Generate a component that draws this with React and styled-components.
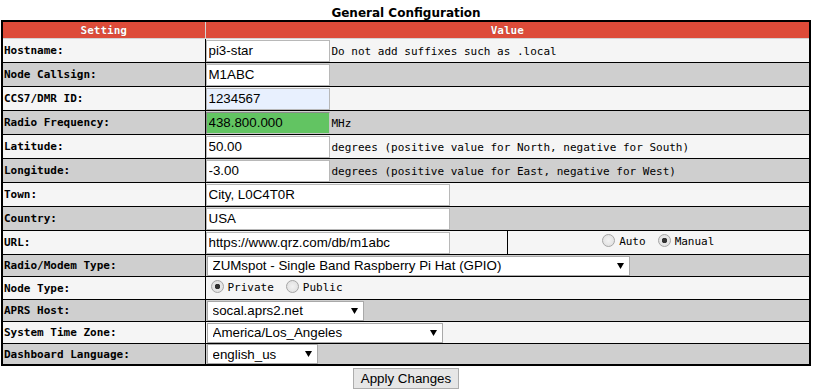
import React from 'react';
import styled, { createGlobalStyle } from 'styled-components';

const GlobalStyle = createGlobalStyle`
  body {
    margin: 0;
    background: #fff;
  }
`;

const Page = styled.div`
  width: 810px;
  margin: 0 1px;
  display: flex;
  flex-direction: column;
  align-items: center;
`;

const Title = styled.div`
  height: 20px;
  font: bold 12px "DejaVu Sans", Verdana, sans-serif;
  line-height: 27px;
  color: #000;
`;

const Table = styled.table`
  width: 810px;
  table-layout: fixed;
  border-collapse: collapse;
  border: 2px solid #000;
  font: 11px "DejaVu Sans Mono", monospace;
  color: #000;
`;

const Th = styled.th`
  height: 16px;
  padding: 0;
  background: #dd4b39;
  color: #fff;
  font-weight: bold;
  text-align: center;
  border: 1px solid #d2d2d2;
  text-shadow: 0 0 1px rgba(0, 0, 0, 0.35);
`;

const Row = styled.tr`
  background: ${p => (p.$alt ? '#cfcfcf' : '#f5f5f5')};
`;

const Label = styled.td`
  height: ${p => p.$h}px;
  padding: 0 1px;
  border: 1px solid #000;
  font-weight: bold;
  white-space: nowrap;
`;

const Cell = styled.td`
  padding: 0;
  border: 1px solid #000;
  text-align: ${p => p.$align || 'left'};
  white-space: nowrap;
`;

const Field = styled.div`
  display: flex;
  align-items: center;
  gap: 2px;
`;

const Hint = styled.span`
  font: 11px "DejaVu Sans Mono", monospace;
  color: #000;
  padding-top: 1px;
`;

const TextInput = styled.input`
  box-sizing: border-box;
  width: ${p => p.$w}px;
  height: 22px;
  margin: 0;
  padding: 1px 2px;
  border: 1px solid #b8b8b8;
  border-color: ${p => (p.$inset ? '#8a8a8a #c8c8c8 #c8c8c8 #8a8a8a' : '#b8b8b8')};
  background: ${p => p.$bg || '#fff'};
  font: 13.333px "Liberation Sans", Arial, sans-serif;
  color: #000;
  outline: none;
`;

const SelectWrap = styled.span`
  position: relative;
  display: inline-block;
  margin-left: 1px;
  vertical-align: middle;
`;

const Select = styled.select`
  box-sizing: border-box;
  appearance: none;
  width: ${p => p.$w}px;
  height: 20px;
  margin: 0;
  padding: 0 16px 0 5px;
  border: 1px solid #a9a9a9;
  border-radius: 0;
  background: #fff;
  font: 13.333px "Liberation Sans", Arial, sans-serif;
  color: #000;
  outline: none;
`;

const Arrow = styled.svg`
  position: absolute;
  right: 6px;
  top: 7px;
  pointer-events: none;
`;

const Radios = styled.div`
  display: inline-flex;
  align-items: center;
  gap: 12px;
  padding-left: ${p => p.$pad || 0}px;
`;

const RadioLabel = styled.label`
  display: inline-flex;
  align-items: center;
  gap: 4px;
  font: 11px "DejaVu Sans Mono", monospace;
  color: #000;
`;

const RadioDot = styled.span`
  box-sizing: border-box;
  width: 13px;
  height: 13px;
  border-radius: 50%;
  border: 1px solid #a6a6a6;
  background: radial-gradient(circle, ${p => (p.$on ? '#333 0 2.5px, #e8e8e8 3px' : '#f2f2f2 0')}, #dcdcdc 100%);
  margin-top: -2px;
`;

const ButtonRow = styled.div`
  padding-top: 2px;
`;

const Button = styled.button`
  height: 21px;
  padding: 0 7px;
  border: 1px solid #adadad;
  background: #e6e6e6;
  font: 13.333px "Liberation Sans", Arial, sans-serif;
  color: #000;
`;

function Dropdown({ width, value }) {
  return (
    <SelectWrap>
      <Select $w={width} defaultValue={value}>
        <option>{value}</option>
      </Select>
      <Arrow width="7" height="6" viewBox="0 0 7 6">
        <path d="M0 0h7L3.5 6z" fill="#000" />
      </Arrow>
    </SelectWrap>
  );
}

function Radio({ on, children }) {
  return (
    <RadioLabel>
      <RadioDot $on={on} />
      {children}
    </RadioLabel>
  );
}

export default function App() {
  return (
    <Page>
      <GlobalStyle />
      <Title>General Configuration</Title>
      <Table>
        <colgroup>
          <col style={{ width: 203 }} />
          <col style={{ width: 302 }} />
          <col />
        </colgroup>
        <thead>
          <tr>
            <Th>Setting</Th>
            <Th colSpan={2}>Value</Th>
          </tr>
        </thead>
        <tbody>
          <Row>
            <Label $h={23}>Hostname:</Label>
            <Cell colSpan={2}>
              <Field>
                <TextInput $w={124} defaultValue="pi3-star" />
                <Hint>Do not add suffixes such as .local</Hint>
              </Field>
            </Cell>
          </Row>
          <Row $alt>
            <Label $h={23}>Node Callsign:</Label>
            <Cell colSpan={2}>
              <Field>
                <TextInput $w={124} defaultValue="M1ABC" />
              </Field>
            </Cell>
          </Row>
          <Row>
            <Label $h={23}>CCS7/DMR ID:</Label>
            <Cell colSpan={2}>
              <Field>
                <TextInput $w={124} $bg="#e8f0fe" defaultValue="1234567" />
              </Field>
            </Cell>
          </Row>
          <Row $alt>
            <Label $h={23}>Radio Frequency:</Label>
            <Cell colSpan={2}>
              <Field>
                <TextInput $w={124} $bg="#62c462" $inset defaultValue="438.800.000" />
                <Hint>MHz</Hint>
              </Field>
            </Cell>
          </Row>
          <Row>
            <Label $h={23}>Latitude:</Label>
            <Cell colSpan={2}>
              <Field>
                <TextInput $w={124} defaultValue="50.00" />
                <Hint>degrees (positive value for North, negative for South)</Hint>
              </Field>
            </Cell>
          </Row>
          <Row $alt>
            <Label $h={23}>Longitude:</Label>
            <Cell colSpan={2}>
              <Field>
                <TextInput $w={124} defaultValue="-3.00" />
                <Hint>degrees (positive value for East, negative for West)</Hint>
              </Field>
            </Cell>
          </Row>
          <Row>
            <Label $h={23}>Town:</Label>
            <Cell colSpan={2}>
              <Field>
                <TextInput $w={244} defaultValue="City, L0C4T0R" />
              </Field>
            </Cell>
          </Row>
          <Row $alt>
            <Label $h={23}>Country:</Label>
            <Cell colSpan={2}>
              <Field>
                <TextInput $w={244} defaultValue="USA" />
              </Field>
            </Cell>
          </Row>
          <Row>
            <Label $h={23}>URL:</Label>
            <Cell>
              <Field>
                <TextInput $w={244} defaultValue="https://www.qrz.com/db/m1abc" />
              </Field>
            </Cell>
            <Cell $align="center">
              <Radios>
                <Radio>Auto</Radio>
                <Radio on>Manual</Radio>
              </Radios>
            </Cell>
          </Row>
          <Row $alt>
            <Label $h={21}>Radio/Modem Type:</Label>
            <Cell colSpan={2}>
              <Dropdown width={423} value="ZUMspot - Single Band Raspberry Pi Hat (GPIO)" />
            </Cell>
          </Row>
          <Row>
            <Label $h={22}>Node Type:</Label>
            <Cell colSpan={2}>
              <Radios $pad={5}>
                <Radio on>Private</Radio>
                <Radio>Public</Radio>
              </Radios>
            </Cell>
          </Row>
          <Row $alt>
            <Label $h={21}>APRS Host:</Label>
            <Cell colSpan={2}>
              <Dropdown width={157} value="socal.aprs2.net" />
            </Cell>
          </Row>
          <Row>
            <Label $h={21}>System Time Zone:</Label>
            <Cell colSpan={2}>
              <Dropdown width={236} value="America/Los_Angeles" />
            </Cell>
          </Row>
          <Row $alt>
            <Label $h={20}>Dashboard Language:</Label>
            <Cell colSpan={2}>
              <Dropdown width={111} value="english_us" />
            </Cell>
          </Row>
        </tbody>
      </Table>
      <ButtonRow>
        <Button>Apply Changes</Button>
      </ButtonRow>
    </Page>
  );
}
